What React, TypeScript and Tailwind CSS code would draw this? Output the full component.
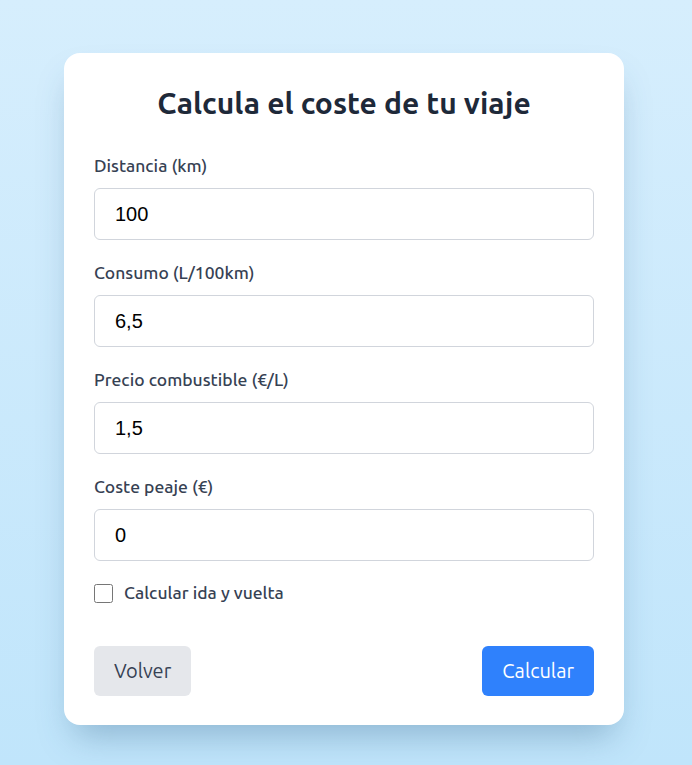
import { useState } from 'react';

const fields = [
  { id: 'distancia', label: 'Distancia (km)', value: '100' },
  { id: 'consumo', label: 'Consumo (L/100km)', value: '6,5' },
  { id: 'precio', label: 'Precio combustible (€/L)', value: '1,5' },
  { id: 'peaje', label: 'Coste peaje (€)', value: '0' },
];

export default function App() {
  const [values, setValues] = useState<Record<string, string>>(
    Object.fromEntries(fields.map((f) => [f.id, f.value]))
  );
  const [idaVuelta, setIdaVuelta] = useState(false);

  return (
    <div className="min-h-screen bg-gradient-to-b from-[#d6eefd] to-[#c0e5fb] flex justify-center pt-[53px] pb-[40px] pr-1 font-['Ubuntu','Noto_Sans',sans-serif]">
      <div className="w-[560px] h-[672px] bg-white rounded-2xl shadow-[0_20px_35px_-10px_rgba(40,90,130,0.35)] px-[30px] pt-[30px] pb-[29px] flex flex-col">
        <h1 className="text-3xl leading-[40px] font-bold text-gray-800 text-center mb-[31px]">
          Calcula el coste de tu viaje
        </h1>

        <div className="flex flex-col gap-[21px]">
          {fields.map((f) => (
            <div key={f.id} className="flex flex-col">
              <label htmlFor={f.id} className="text-[17.5px] font-medium leading-6 text-gray-700 mb-[10px]">
                {f.label}
              </label>
              <input
                id={f.id}
                type="text"
                value={values[f.id]}
                onChange={(e) => setValues({ ...values, [f.id]: e.target.value })}
                className="h-[52px] w-full rounded-md border border-gray-300 px-5 text-xl text-black font-['Liberation_Sans',Arial,sans-serif] outline-none"
              />
            </div>
          ))}
        </div>

        <label className="flex items-center gap-[11px] mt-5 h-6 text-[17.5px] font-medium text-gray-700">
          <input
            type="checkbox"
            checked={idaVuelta}
            onChange={(e) => setIdaVuelta(e.target.checked)}
            className="w-[19px] h-[19px] m-0"
          />
          Calcular ida y vuelta
        </label>

        <div className="flex justify-between mt-auto">
          <button className="h-[50px] px-5 rounded-md bg-gray-200 text-xl text-gray-700">
            Volver
          </button>
          <button className="h-[50px] px-5 rounded-md bg-[#2f81fc] text-xl text-white">
            Calcular
          </button>
        </div>
      </div>
    </div>
  );
}
